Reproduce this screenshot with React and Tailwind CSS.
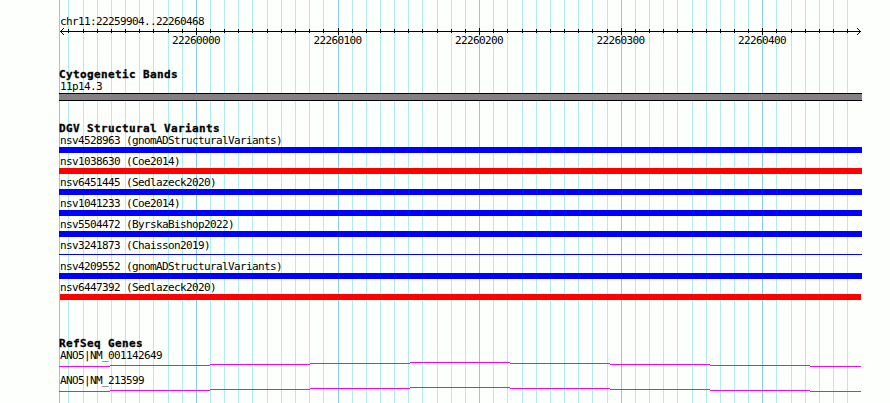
const minorLines = [
  68, 83, 97, 111, 125, 139, 153, 168, 182, 210, 224, 238, 252, 267, 281, 295,
  309, 323, 352, 366, 380, 394, 408, 422, 437, 451, 465, 493, 507, 522, 536,
  550, 564, 578, 592, 607, 635, 649, 663, 677, 692, 706, 720, 734, 748, 776,
  791, 805, 819, 833, 847,
];
const majorLines = [196, 338, 479, 621, 762];

const variants = [
  { label: "nsv4528963 (gnomADStructuralVariants)", bar: "h-1.5 bg-[#0000ff]" },
  { label: "nsv1038630 (Coe2014)", bar: "h-1.5 bg-[#ff0000]" },
  { label: "nsv6451445 (Sedlazeck2020)", bar: "h-1.5 bg-[#0000ff]" },
  { label: "nsv1041233 (Coe2014)", bar: "h-1.5 bg-[#0000ff]" },
  { label: "nsv5504472 (ByrskaBishop2022)", bar: "h-1.5 bg-[#0000ff]" },
  { label: "nsv3241873 (Chaisson2019)", bar: "mt-0.5 h-px bg-[#0000ff]" },
  { label: "nsv4209552 (gnomADStructuralVariants)", bar: "h-1.5 bg-[#0000ff]" },
  { label: "nsv6447392 (Sedlazeck2020)", bar: "ml-px mr-px h-1.5 bg-[#ff0000]" },
];

const genes = ["ANO5|NM_001142649", "ANO5|NM_213599"];

function Grid() {
  return (
    <svg className="absolute inset-0" width="890" height="403" shapeRendering="crispEdges">
      {minorLines.map((x) => (
        <rect key={x} x={x} y="0" width="1" height="403" fill="#afeeee" />
      ))}
      {[59, ...majorLines].map((x) => (
        <rect key={x} x={x} y="0" width="1" height="403" fill="#87ceeb" />
      ))}
    </svg>
  );
}

function Label({ children }) {
  return (
    <div className="h-[13px] pl-px text-[11px] leading-[13px] tracking-[-0.622px] whitespace-pre">
      {children}
    </div>
  );
}

function Heading({ children }) {
  return (
    <h2 className="h-[13px] text-[11px] leading-[13px] font-bold tracking-[0.378px] whitespace-pre [-webkit-text-stroke:0.3px_black]">
      {children}
    </h2>
  );
}

function Ruler() {
  return (
    <svg className="block" width="803" height="8" shapeRendering="crispEdges">
      <rect x="1" y="3" width="801" height="1" />
      {minorLines.map((x) => (
        <rect key={x} x={x - 59} y="1" width="1" height="4" />
      ))}
      {majorLines.map((x) => (
        <rect key={x} x={x - 59} y="0" width="1" height="7" />
      ))}
      <path d="M2 2h1v1h-1zM3 1h1v1h-1zM4 0h1v1h-1zM2 4h1v1h-1zM3 5h1v1h-1zM4 6h1v1h-1z" />
      <path d="M800 2h1v1h-1zM799 1h1v1h-1zM798 0h1v1h-1zM800 4h1v1h-1zM799 5h1v1h-1zM798 6h1v1h-1z" />
    </svg>
  );
}

function Transcript() {
  return (
    <svg className="block" width="803" height="5" shapeRendering="crispEdges" fill="#ff00ff">
      <rect x="0" y="4" width="51" height="1" />
      <rect x="51" y="3" width="100" height="1" />
      <rect x="151" y="2" width="100" height="1" />
      <rect x="251" y="1" width="100" height="1" />
      <rect x="351" y="0" width="100" height="1" />
      <rect x="451" y="1" width="100" height="1" />
      <rect x="551" y="2" width="100" height="1" />
      <rect x="651" y="3" width="100" height="1" />
      <rect x="751" y="4" width="51" height="1" />
    </svg>
  );
}

export default function App() {
  return (
    <div className="relative h-[403px] w-[890px] overflow-hidden bg-[#fdfffc] font-['DejaVu_Sans_Mono',monospace] text-black">
      <Grid />
      <main className="relative ml-[59px] flex w-[803px] flex-col pt-[15px]">
        <header className="h-[53px]">
          <Label>chr11:22259904..22260468</Label>
          <Ruler />
          <div className="flex pl-[113px]">
            {["22260000", "22260100", "22260200", "22260300", "22260400"].map((n) => (
              <div key={n} className="w-[141.5px] shrink-0 text-[11px] leading-[10px] tracking-[-0.622px]">
                {n}
              </div>
            ))}
          </div>
        </header>
        <section className="h-[54px]">
          <Heading>Cytogenetic Bands</Heading>
          <div className="-mt-px">
            <Label>11p14.3</Label>
            <div className="h-2 border-y border-black bg-[#848084]" />
          </div>
        </section>
        <section className="h-[215px]">
          <Heading>DGV Structural Variants</Heading>
          <div className="-mt-px">
            {variants.map((v) => (
              <div key={v.label} className="flow-root h-[21px]">
                <Label>{v.label}</Label>
                <div className={v.bar} />
              </div>
            ))}
          </div>
        </section>
        <section>
          <Heading>RefSeq Genes</Heading>
          <div className="-mt-px">
            {genes.map((g) => (
              <div key={g} className="h-[25px]">
                <Label>{g}</Label>
                <Transcript />
              </div>
            ))}
          </div>
        </section>
      </main>
    </div>
  );
}
